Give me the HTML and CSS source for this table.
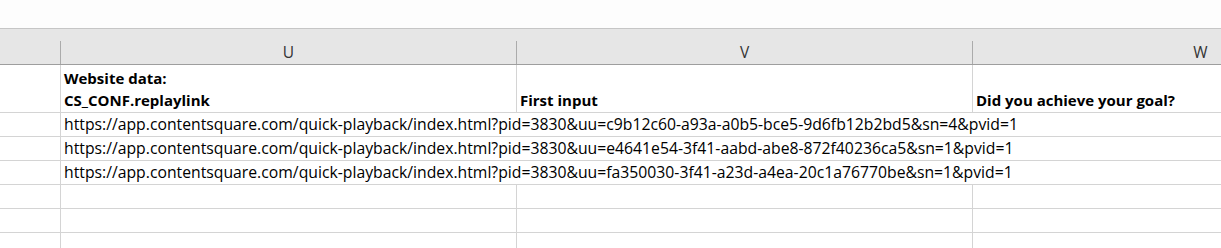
FILE: index.html
```html
<!DOCTYPE html>
<html lang="en">
<head>
    <meta charset="UTF-8">
    <title>Sheet1</title>
    <link rel="stylesheet" href="styles.css">
</head>
<body>
    <div class="ribbon"></div>

    <div class="col-heads">
        <div class="corner"></div>
        <div class="col-head">U</div>
        <div class="col-head">V</div>
        <div class="col-head">W</div>
    </div>

    <div class="sheet">
        <div class="row row-tall">
            <div class="row-num"></div>
            <div class="cell bold">Website data:<br>CS_CONF.replaylink</div>
            <div class="cell bold">First input</div>
            <div class="cell bold">Did you achieve your goal?</div>
        </div>
        <div class="row">
            <div class="row-num"></div>
            <div class="cell spill">https://app.contentsquare.com/quick-playback/index.html?pid=3830&amp;uu=c9b12c60-a93a-a0b5-bce5-9d6fb12b2bd5&amp;sn=4&amp;pvid=1</div>
        </div>
        <div class="row">
            <div class="row-num"></div>
            <div class="cell spill">https://app.contentsquare.com/quick-playback/index.html?pid=3830&amp;uu=e4641e54-3f41-aabd-abe8-872f40236ca5&amp;sn=1&amp;pvid=1</div>
        </div>
        <div class="row">
            <div class="row-num"></div>
            <div class="cell spill">https://app.contentsquare.com/quick-playback/index.html?pid=3830&amp;uu=fa350030-3f41-a23d-a4ea-20c1a76770be&amp;sn=1&amp;pvid=1</div>
        </div>
        <div class="row">
            <div class="row-num"></div>
            <div class="cell"></div>
            <div class="cell"></div>
            <div class="cell"></div>
        </div>
        <div class="row">
            <div class="row-num"></div>
            <div class="cell"></div>
            <div class="cell"></div>
            <div class="cell"></div>
        </div>
        <div class="row">
            <div class="row-num"></div>
            <div class="cell"></div>
            <div class="cell"></div>
            <div class="cell"></div>
        </div>
    </div>
</body>
</html>
```

FILE: styles.css
```css
* {
    box-sizing: border-box;
}
html, body {
    margin: 0;
    padding: 0;
    background: #ffffff;
    overflow: hidden;
}
body {
    font-family: 'Open Sans', 'Liberation Sans', sans-serif;
    font-size: 15px;
    color: #000;
    width: 1221px;
    height: 248px;
}
.ribbon {
    height: 29px;
    background: #fdfdfd;
    border-bottom: 1px solid #c6c6c6;
}
.col-heads {
    display: grid;
    grid-template-columns: 60px 456px 456px 456px;
    height: 36px;
    padding-top: 12px;
    background: #e6e6e6;
    border-bottom: 1px solid #9e9e9e;
}
.col-head {
    border-left: 1px solid #ababab;
    text-align: center;
    color: #333;
    font-size: 15.5px;
    line-height: 23px;
}
.sheet {
    display: flex;
    flex-direction: column;
}
.row {
    display: grid;
    grid-template-columns: 60px 456px 456px 456px;
    height: 24px;
    border-bottom: 1px solid #d4d4d4;
}
.row-tall {
    height: 48px;
}
.cell {
    border-left: 1px solid #d4d4d4;
    padding: 0 3px 2px;
    display: flex;
    align-items: flex-end;
    line-height: 22px;
    white-space: nowrap;
}
.row-tall .cell {
    display: block;
    padding-top: 2px;
}
.row-tall .cell + .cell {
    padding-top: 24px;
}
.bold {
    font-weight: 700;
}
/* long urls run over the empty cells to their right */
.spill {
    grid-column: span 3;
    font-size: 15.75px;
}
```
